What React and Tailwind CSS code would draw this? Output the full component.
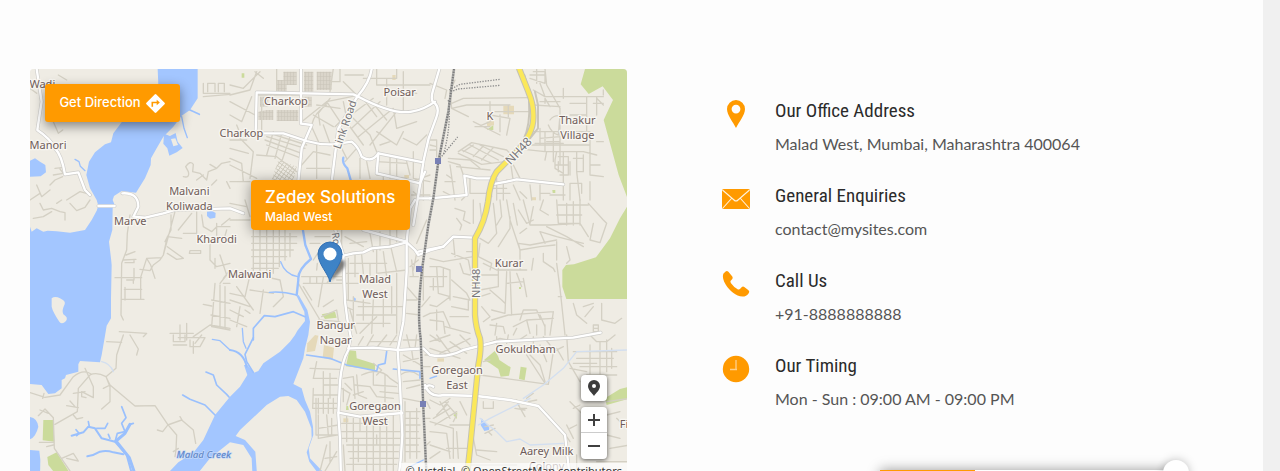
import React from "react";

/* ---------- map data ---------- */

const WATER = [
  "M383 12 L385 60 L300 150 L275 172 L250 205 L243 232 L225 238 L195 262 L177 290 L169 330 L180 370 L200 405 L205 422 L200 437 L185 465 L165 495 L120 503 L80 499 L53 497 L40 500 L20 490 L5 500 L0 485 V957 L35 960 L55 987 L75 985 L95 970 V945 L105 940 L108 930 L145 920 V898 L150 888 L210 892 L215 870 L225 812 L230 782 L243 760 V700 L245 600 L243 580 L237 530 L247 495 L248 430 L254 420 L248 405 L252 393 L275 378 L318 383 L345 340 L362 300 L363 280 L380 250 L400 215 L430 185 L455 152 L480 135 L503 100 V12 Z",
  "M0 287 L15 280 L30 290 L46 300 L48 322 L32 334 L0 335 Z",
  "M402 206 L420 213 L437 204 L443 230 L458 249 L440 262 L418 272 L412 250 L400 236 Z",
  "M531 440 L545 437 L557 444 L556 458 L540 461 L531 453 Z",
  "M0 1056 Q22 1060 25 1085 Q18 1115 0 1123 Z",
  "M0 1155 L28 1157 L31 1185 L30 1242 H0 Z",
  "M400 1242 L420 1218 L445 1192 L490 1163 L520 1125 L555 1050 L600 995 L630 965 L652 930 L642 900 L652 900 L672 923 L685 918 L700 895 L750 860 L780 830 L795 810 L802 797 L825 768 L823 740 L800 694 L806 690 L832 735 L840 770 L835 810 L825 850 L820 880 L790 957 L815 970 L825 1005 L840 1040 L849 1085 L850 1110 L836 1150 L840 1180 L880 1222 L862 1222 L838 1190 L830 1162 L845 1118 L844 1090 L825 1040 L800 1005 L775 993 L750 995 L710 1020 L630 1095 L617 1113 L645 1125 L676 1160 L682 1242 H668 L665 1180 L640 1140 L600 1132 L540 1180 L490 1242 Z",
  "M1355 1060 L1378 1088 L1377 1095 L1363 1098 L1352 1080 Z",
  "M972 697 L978 701 L976 712 L971 708 Z",
];

const ISLANDS = [
  "M65 700 Q75 692 90 700 Q108 708 104 718 Q94 738 100 748 Q116 758 108 768 Q96 780 88 770 Q68 740 65 725 Z",
  "M423 222 L436 220 L444 240 L430 244 Z",
];

const STREAMS = [
  ["M455 155 L462 190 L472 218", 4], ["M480 135 L508 148", 5], ["M135 283 L147 290 L151 304 L165 317", 4],
  ["M940 278 Q935 295 952 310 L962 345", 7],
  ["M818 490 L826 540 L843 582 Q802 615 805 645 L800 690", 7],
  ["M752 590 Q765 628 803 635", 4], ["M718 682 Q755 678 800 690", 4],
  ["M670 825 V790 L703 752 L735 755 L790 740 L825 755", 5], ["M670 818 L645 868 L650 890 L670 922", 5],
  ["M600 855 Q640 860 650 905", 6], ["M637 790 L640 830 L648 850", 4],
  ["M528 921 L550 930 L560 960 L590 988 L597 996", 5], ["M458 990 L480 1003 L525 1020 L555 1050", 5],
  ["M547 823 L570 827 L600 855", 4], ["M310 1242 L290 1170 L255 1130 L215 1120 L195 1090 L175 1085 L160 1102 L125 1112", 6],
  ["M320 1242 L298 1178 L258 1128 L285 1105 L300 1078", 9],
  ["M175 1070 L178 1085 M200 1090 L225 1090 L233 1075 M138 1094 L147 1105 L140 1112 M235 1108 L240 1120 M255 1130 L262 1105 L285 1100 L275 1075 L288 1058 L275 1025 M300 1078 L310 1075", 5],
  ["M172 1174 Q190 1172 210 1160 Q230 1155 250 1162 L280 1168", 6],
  ["M830 870 L900 880 L950 900 L1040 918 L1045 900 L1065 895 L1070 860", 5],
  ["M1090 912 L1170 920 L1170 940", 5], ["M1140 1205 L1180 1185", 4], ["M1200 940 L1220 933", 4],
];

const BROOKS = [
  "M215 890 Q240 895 250 920", "M1480 1000 L1540 960 L1600 910 L1640 860 L1790 855",
  "M1350 1060 L1400 1100 L1430 1130 L1470 1122 L1500 1140 L1600 1135", "M1345 1080 L1380 1060 L1440 1030 L1500 1000",
];

const GREENS = [
  "M1665 12 L1652 58 L1676 87 L1718 64 L1749 105 L1721 165 L1766 330 L1800 420 V12 Z",
  "M1800 410 L1770 460 L1740 520 L1698 577 L1632 598 L1608 600 L1597 615 V665 L1609 702 H1800 Z",
  "M958 856 L978 858 L980 880 L1035 897 L1035 915 L948 904 Z",
  "M875 748 L915 740 L920 758 L885 762 Z", "M1370 195 L1390 180 V195 L1375 195 Z",
  "M1362 885 L1395 857 L1405 875 L1408 885 L1442 907 L1437 932 L1412 935 L1405 912 L1380 895 Z",
  "M1472 905 L1490 908 L1484 946 L1467 942 Z",
  "M40 1065 H70 L73 1130 L38 1126 Z", "M52 1176 L80 1162 L120 1225 L75 1225 L55 1200 Z",
  "M1725 1000 L1770 972 L1800 965 V1000 L1730 1020 Z", "M1270 1050 L1282 1042 L1280 1062 Z",
  "M949 1023 H956 V1035 H948 Z", "M635 25 H643 V38 H635 Z", "M1567 375 H1576 V384 H1568 Z", "M1467 666 h6 v6 h-6 Z",
];
const SANDS = [
  "M832 835 L855 810 L865 812 L855 858 L830 862 Z", "M882 840 L912 848 L908 886 L878 878 Z",
  "M1420 122 H1452 V148 H1420 Z", "M1370 170 L1392 162 V180 L1372 185 Z", "M1505 397 h13 v9 h-13 Z",
  "M862 34 H885 V48 H862 Z", "M1222 880 H1242 V890 H1222 Z", "M940 1060 H955 V1072 H940 Z",
  "M1087 30 h10 v15 h-10 Z", "M1123 330 h14 v10 h-14 Z",
];

/* minor streets, one list per 600x405 sheet */
const SHEETS = [
  [0, 0, "M60 75 L75 95 L60 110 M70 170 L85 205 L98 195 M520 55 V85 H600 M533 80 V55 H555 V80 M565 80 V55 H583 V80 M520 95 L600 88 M75 310 L95 308 M70 330 L100 325 L90 312 M60 360 L75 345 L98 335 M20 360 L35 395 L60 375 M0 405 L30 385 M110 405 L150 380 L180 388 M460 335 Q480 340 475 320 L467 305 Q480 285 490 298 L488 320 L510 325 L530 345 L535 320 L560 310 M540 298 L560 310 L575 295 L600 290 M560 345 L545 360 M590 350 L600 370 M500 345 L520 330 M0 70 L20 85 M85 30 L110 45"],
  [0, 405, "M30 10 L40 30 L65 25 L90 35 L105 38 V60 M10 55 L40 50 L65 35 M120 10 L140 32 L165 22 L180 0 M80 10 L95 0 M300 45 L292 100 L290 150 L275 190 L273 345 L280 360 M288 165 L315 155 M280 180 L318 178 M285 188 H312 V178 M255 233 H335 M312 205 V240 H290 M283 268 H335 M273 298 H342 M332 298 V232 L350 175 L395 173 M285 300 V262 M310 250 V240 M350 175 L362 195 L375 235 M330 208 L360 212 L370 195 L390 180 L400 165 L412 110 L455 115 M435 35 L400 165 M423 45 V90 L405 125 M412 140 L460 175 L440 178 L412 160 M480 152 H512 V160 H478 Z M445 90 L485 40 M500 35 V105 M460 100 H500 M515 45 L520 80 L545 95 L560 80 H600 M560 70 V130 M600 55 L575 75 M590 90 L580 125 M540 130 V180 L560 200 L600 190 M555 175 V205 M570 165 L590 225 L570 250 M600 210 L580 235 M555 250 L545 380 L600 390 M545 300 L600 310 M570 255 V385 M585 260 V385 M543 345 L600 355 M600 250 H580 M520 313 L545 318 M268 395 L350 400 L340 410 M420 400 H490 M450 375 V420 M470 370 V420 M490 410 L540 375 L600 385"],
  [0, 810, "M280 0 L260 60 L258 100 L228 125 L240 150 L315 213 L375 212 L413 268 L440 300 L438 345 M230 20 L275 22 M300 0 L325 42 L320 60 M228 125 Q200 110 180 120 L145 160 L142 230 L75 268 M185 118 Q160 100 130 125 L90 180 L45 187 L0 173 M42 175 L38 190 M165 100 L190 155 V188 L155 170 V185 L168 188 M130 175 L165 170 M110 212 L145 218 M120 198 L135 215 M130 240 L140 252 L158 248 M230 130 L240 155 V200 L215 222 M220 160 L240 150 M413 270 L455 255 L490 285 L497 325 M450 245 L458 258 M382 285 L398 290 L412 272 M430 350 L445 340 M438 345 L435 365 M70 250 L73 340 L120 408 M28 322 H70 M50 335 L70 330 M25 242 L45 222 L70 248 M30 225 L55 235 M95 370 L130 355 L145 378 L110 370 M430 0 V20 H465 V0 M445 8 H525 L510 35 H480 V15 M490 20 V55 M430 30 H470 M515 0 L495 25"],
  [600, 0, "M0 90 L60 75 L80 20 M75 20 L100 40 M0 60 L40 70 L90 20 M0 110 L75 150 M35 170 L65 95 M85 90 H210 M95 100 V205 M215 170 L290 110 L380 92 M140 90 V12 M0 150 L35 170 M245 180 Q255 140 290 120 M270 180 L265 145 L300 100 M290 110 L330 170 L315 185 M250 150 L310 185 M260 120 L330 130 M245 185 L270 240 M280 180 L300 235 M340 110 L350 160 M345 165 L400 240 M350 140 L420 210 L440 260 M350 160 L430 100 M365 190 L450 110 M385 215 L490 130 M420 240 L500 140 M440 200 L500 240 L520 200 M395 95 L440 155 M425 110 L470 165 M400 40 H500 V0 M440 0 V60 H600 M470 40 V120 M520 20 V140 M500 75 L560 85 M490 130 L500 190 L560 170 M310 10 L300 80 M330 12 V50 H300 M340 50 L380 90 M345 30 H400 M530 290 L540 330 M480 270 V340 M500 280 V350 M440 290 L530 295 M450 240 L480 230 M520 220 L560 240 L590 210 M120 205 L230 240 M110 215 L225 250 M105 225 L215 265 M110 240 L215 280 M130 200 L110 270 M155 205 L135 280 M180 215 L155 290 M80 270 L140 275 L200 320 M0 280 L35 295 L40 350 M30 220 L70 260 L60 340 M0 300 L80 340 M0 350 H60 M215 300 L250 260 L300 270 M260 240 V340 M230 310 H300 M330 240 L350 280 M380 250 L345 290 M390 280 V340 M410 290 L420 340 M440 330 L530 340 M460 330 V345 M0 225 H50 M0 250 L55 265 M20 180 L30 205 M550 260 V340 L600 350 M550 380 L580 405 M545 350 L600 330 M580 300 V400 M545 390 H600"],
  [600, 405, "M0 60 H60 M0 10 L50 20 M45 0 L60 50 M65 110 H200 M65 130 H200 M65 150 H190 M65 170 H170 M70 190 H150 M65 205 H145 M70 90 V215 M90 90 V220 M110 85 V230 M130 90 V220 M148 90 V200 M165 90 V180 M180 100 V170 M60 225 L45 290 L0 280 M0 300 L60 320 M20 260 L70 330 M0 330 L40 350 M0 360 L50 380 M30 320 L20 380 M45 330 L60 340 M60 220 L150 240 L160 290 L130 320 M60 270 L130 280 M100 270 L90 340 M215 230 H335 M220 250 H335 M240 230 V250 M260 230 V250 M280 232 L265 320 M205 250 L270 360 M260 210 L262 190 M310 225 L290 250 M320 240 H335 M220 260 L245 300 M270 130 H240 M270 150 L250 180 M255 110 H300 M355 175 V300 M375 165 V230 M395 165 L400 220 M360 190 H470 M350 220 H385 M420 190 V240 M440 150 V220 L530 210 M460 155 L470 230 M480 130 L500 215 M345 250 H385 M350 300 L420 310 M370 290 V380 M400 300 V360 M385 320 H520 M430 300 L425 400 M460 290 V380 M485 260 V340 M500 220 V400 M380 345 H500 M370 370 H480 M390 400 L440 350 M360 330 L380 400 M420 100 L430 155 M450 95 V150 M480 90 V140 M500 80 V125 M360 130 L410 125 M345 110 L400 140 M335 90 V160 M545 180 L550 230 M540 230 H565 M560 160 L550 210 M530 260 L565 300 M525 300 H560 M530 340 L570 345 M540 200 L565 180 M580 160 V300 M600 230 H575 M590 60 L560 130 M600 290 L575 320 M580 350 L600 340 M275 350 L320 330 L325 360 M265 360 L330 365 M280 320 L310 300 M345 320 L370 330"],
  [600, 810, "M260 80 L250 130 H320 M240 100 L330 103 M280 110 V215 M300 115 V190 M285 130 H320 M280 150 H325 M250 180 H325 M258 190 V300 H325 M250 160 L248 220 H322 M265 235 V190 M280 190 V235 M295 190 V235 M310 190 V235 M248 205 H322 M265 240 V310 M290 240 L295 300 M265 280 L325 270 M305 250 V300 M265 310 L320 300 M290 330 L270 408 M320 350 L285 408 M300 320 V380 M285 370 L320 365 M340 130 L370 125 L375 190 M345 145 L365 165 M335 160 L360 175 L350 210 M340 200 V160 M380 120 L385 180 L410 190 M395 120 Q450 95 480 130 L510 150 M375 150 L420 155 L440 185 L490 190 M430 110 V150 L500 155 M370 180 L400 170 M465 120 V200 M450 170 L505 175 M350 240 V320 M370 250 V408 M390 245 V290 M410 245 V408 M430 245 V408 M450 250 V408 M470 245 V408 M490 240 V408 M335 290 H510 M335 310 H510 M350 330 H510 M355 350 H505 M360 370 H505 M335 265 H420 M340 330 L345 408 M385 310 V380 M350 388 H500 M440 300 V330 M525 200 V380 M540 230 V370 M560 220 V370 M525 230 H570 M525 250 H565 M525 270 H570 M525 290 H565 M525 310 H570 M525 330 H565 M525 350 H570 M520 190 L570 200 M530 160 L570 150 M510 120 Q540 100 565 120 M520 140 L570 135 M520 80 L565 70 M530 0 L540 40 M560 0 L555 40 M385 30 L400 5 M410 35 L430 0 M440 38 L470 0 M480 30 L500 0 M420 20 H500 M520 15 H570 M520 60 L580 95 M545 45 L550 80 M580 95 H600 M585 60 H600 M430 85 L455 105 L440 120 M590 200 L600 220 M585 250 H600 M590 330 L600 320"],
  [1200, 0, "M0 55 L50 75 L45 100 M75 45 L60 80 L65 130 L115 155 M65 115 L100 100 L300 98 M65 130 L110 120 H240 M145 185 L180 170 V110 M135 185 H180 M180 150 L240 160 L230 210 M180 140 H300 M235 120 V155 M210 150 V200 M130 170 L210 210 M300 40 L345 55 V20 H310 M330 55 L345 95 M310 75 L345 95 H520 M300 30 H345 M320 12 V55 M345 12 L350 60 L390 130 V300 M345 100 L360 125 M345 100 V115 M330 110 H390 M310 120 L390 125 M310 200 H480 M330 220 L390 215 M315 235 H400 M400 70 V100 M470 95 V210 M500 95 V150 M420 115 H470 M420 150 H470 M490 115 H520 M360 165 Q370 150 390 152 M355 180 Q365 205 385 210 L390 150 M270 240 H480 M255 250 L345 260 H460 L500 270 M345 200 V260 M370 200 V290 M330 190 V240 M350 230 H390 M240 280 L250 350 M250 300 L270 340 M350 260 L345 285 M375 285 L380 260 M375 285 V310 L400 325 V405 M385 275 H415 V330 H390 M375 300 H415 M385 290 V320 M400 260 V330 M440 260 V320 H460 V270 M430 280 H460 M420 290 V330 M480 250 V330 L520 335 M480 300 H510 M480 210 V250 M500 230 H520 M440 320 L450 405 M300 360 L305 405 M330 360 V405 M360 390 H405 M420 355 V405 M455 385 V355 H420 M480 350 V405 M330 385 H360 M270 380 L290 400 M85 260 L125 233 L230 255 L240 265 M85 265 L155 298 L225 290 M95 255 L185 295 M120 240 L205 285 M150 240 L220 275 M100 260 L130 240 M130 275 L160 243 M155 285 L190 248 M0 225 H20 V275 M0 240 L20 245 M0 255 H20 M55 290 L90 300 L100 330 M55 280 L120 285 L150 310 M80 305 L180 315 M60 300 L75 405 M50 330 L65 340 M45 350 H75 M120 335 V385 H170 M110 390 L95 405 M200 340 V405 M220 350 V405 M190 370 H230 M200 385 H240 M250 360 L270 405 M60 390 L40 380 M500 100 L520 120 M520 90 V75 M250 350 L230 345 M180 340 L185 395"],
  [1200, 405, "M75 25 L105 35 L100 60 L120 70 M80 55 L95 75 L90 90 M130 0 V70 M150 10 L155 60 M190 10 L200 100 L175 130 L150 115 M210 0 L215 50 L200 75 M230 0 L240 60 L270 150 L265 130 M240 50 V85 L205 140 M250 10 L262 75 M265 30 L290 70 L310 60 M280 0 L300 75 H360 L450 70 L475 110 M310 20 L300 70 M270 100 L290 85 M265 130 L300 135 L380 120 M270 150 L330 140 L375 135 M330 95 L345 130 M380 125 V180 M340 160 V185 L370 205 L375 215 M310 175 L305 210 M330 95 L380 110 L460 130 M350 80 L410 110 L460 140 M340 0 L330 30 L355 45 M380 0 L385 70 H450 M410 10 V75 M430 5 V75 M450 0 V75 M385 15 H475 M380 45 H455 M475 10 L520 60 L530 70 M530 70 L510 128 L480 120 L490 70 M410 140 L420 180 L410 190 M380 190 L390 265 L405 405 M270 150 V210 M110 155 H130 M65 160 L115 180 L125 230 M0 200 H30 L60 210 V300 M0 230 H50 M10 235 V270 M40 205 V260 H0 M20 200 L25 280 L60 290 M0 175 L40 185 L130 170 M70 120 L75 170 M90 190 L100 220 L120 225 M65 240 L110 280 L120 300 L70 290 M60 290 L20 320 L0 315 M0 340 L40 335 L60 380 M20 330 V390 M65 320 L115 330 V300 M45 380 L120 400 M60 350 H115 M0 360 L40 365 L45 400 M150 130 L145 170 L185 190 L180 210 M160 190 L200 210 H290 M205 205 V260 L150 270 M155 225 H205 M230 215 L225 340 L185 330 M240 215 L245 345 M260 220 L275 260 M280 235 L290 290 M150 290 L180 280 M230 250 L280 245 M155 320 L180 350 L160 365 M180 270 L215 300 L225 310 M185 360 L235 345 L300 340 L370 335 M270 360 L280 330 L320 330 L330 355 M180 375 L220 380 L225 400 M200 370 L195 405 M290 360 L300 400 M250 380 L290 360 L370 355 M260 385 L250 405 M320 375 V405 M345 375 V405 M330 345 L345 380 M370 335 L360 405 M430 310 L440 345 L470 370 M460 320 L490 310 M465 350 L490 320 M515 310 V360 L555 370 L575 355 M490 375 V395 H505 V375 Z M490 385 H505 M385 290 L395 290"],
  [1200, 810, "M0 20 L60 0 M20 0 L65 60 M0 40 L90 70 M30 55 L120 10 M60 20 L110 55 M90 0 L120 30 M0 0 L30 20 M160 30 L210 10 L260 20 L290 0 M200 30 V5 M230 25 L235 0 M310 5 V25 M340 5 L360 30 M380 40 L400 75 M160 80 L180 75 M150 120 L355 148 L370 50 L400 35 M290 60 L345 145 M300 60 L330 90 L345 140 M350 40 L370 50 M330 30 L350 80 M410 0 L415 80 L450 140 M430 50 H560 M440 70 H550 M430 85 H500 M450 95 H560 M480 30 V100 M510 20 V120 M530 15 V110 M545 40 V100 M420 100 L470 110 M555 0 L530 20 H500 L480 0 M470 120 H560 M480 100 V120 M160 200 V220 H190 V200 M260 195 L270 220 H290 M265 210 L285 245 M255 220 L285 225 M290 190 L310 175 M295 200 L320 195 M165 275 L190 270 M165 295 L195 280 M175 290 L185 300 M0 195 L30 210 L60 190 M30 200 L60 250 M45 200 L80 240 L70 260 M40 215 L55 200 M20 240 L50 210 M10 250 L60 220 M15 270 L80 230 M90 200 L110 240 M60 270 H120 M0 260 L70 280 V370 M0 290 L50 295 L60 370 M80 290 L85 370 M50 340 H110 M0 330 L60 350 M0 370 L30 350 M130 310 L140 360 L180 375 M140 345 L200 350 M110 390 H260 M410 270 L430 310 M400 290 L420 320 M420 280 L440 270 M420 200 L460 240 M430 220 L450 210 M530 240 L570 230 M530 300 L570 310 M540 340 L600 330 M530 200 L600 190 M440 360 V400 M500 380 H600 M560 250 L590 280"],
];

const MAJOR = [
  "M20 12 L35 110 L22 195 Q60 220 75 250 Q95 270 105 328 L145 322 L165 375 L180 390",
  "M277 385 Q325 382 325 425 L310 455 L345 458 L400 445 L435 435 L600 430 L640 445",
  "M205 423 H254",
  "M677 205 L680 82 L970 88 L985 95 Q1090 150 1145 140 Q1180 135 1215 110",
  "M813 12 L813 176 L845 180 L815 250 L805 350", "M677 205 H760 L830 228 Q870 240 910 238 L965 230 Q985 245 995 275 Q1025 295 1045 265 L1180 292 L1170 360 L1150 480",
  "M1045 265 L1040 325 L1170 355 L1185 320", "M1025 12 Q1020 50 982 95 L925 190 L905 350 L908 470 L940 570 L945 710 Q950 760 962 815",
  "M962 815 L955 855 Q935 890 930 950 L925 1050 L930 1120 L933 1242",
  "M1228 12 L1208 80 Q1200 110 1215 115 Q1230 130 1218 160 L1196 220 L1180 290",
  "M940 572 L970 565 L1000 562 L1025 550 L1080 545 L1130 532 L1155 555 L1165 570 L1200 556 L1240 545 L1270 515 L1330 518",
  "M1000 495 L1130 530 L1140 430 L1155 405", "M1130 530 V620 L1120 770 L1103 856 L1110 960 L1117 1110 L1112 1185 L1105 1242",
  "M1200 400 L1310 390 L1303 332 L1340 340 L1385 340 M1385 358 L1430 350 L1460 343 L1600 358",
  "M955 850 L1030 848 L1105 855 L1180 850 L1200 870 Q1250 880 1300 855 L1400 830 L1630 818 L1712 803",
  "M925 1043 L990 1055 L1117 1044", "M1165 560 L1190 555 L1240 545", "M1185 960 Q1200 1000 1240 990 L1340 993 L1440 1005 L1525 1023 L1550 1050 L1605 1110 L1620 1242",
  "M1185 970 Q1195 955 1210 965", "M1165 400 H1200",
];

const RAILS = ["M1272 12 L1255 140 L1225 290 L1210 400 L1195 480 L1178 600 Q1160 740 1172 820 L1180 1030 L1190 1242"];
const SIDINGS = ["M1258 75 L1290 58 L1410 43", "M1262 80 L1285 72 L1410 61", "M1230 280 L1283 216", "M1255 105 Q1265 180 1240 270"];
const HIGHWAY = "M1468 12 L1495 80 Q1512 120 1510 160 Q1510 205 1460 260 L1400 320 Q1380 350 1374 410 Q1365 470 1335 520 L1335 750 Q1338 790 1350 820 Q1355 850 1345 900 L1320 1150 L1310 1242";

const LABELS = [
  ["Wadi", 37, 69], ["Manori", 54, 252], ["Charkop", 768, 119], ["Charkop", 634, 216], ["Malvani", 478, 390],
  ["Koliwada", 478, 434], ["Marve", 301, 479], ["Kharodi", 560, 534], ["Malwani", 659, 638], ["Poisar", 1109, 94],
  ["Thakur", 1642, 177], ["Village", 1642, 222], ["Kurar", 1437, 605], ["Malad", 1035, 653], ["West", 1035, 698],
  ["Bangur", 917, 793], ["Nagar", 917, 838], ["Gokuldham", 1487, 863], ["Goregaon", 1281, 926], ["East", 1281, 971],
  ["Goregaon", 1035, 1036], ["West", 1035, 1081], ["Aarey Milk", 1550, 1170], ["Colony", 1550, 1214], ["K", 1380, 164], ["Fi", 1782, 1088],
];

const ROAD_LABELS = [
  ["Link Road", 943, 178, -71, 33], ["Road", 922, 538, 82, 30], ["NH48", 1465, 257, -46, 36], ["NH48", 1335, 655, -90, 33],
];

function Streets({ x, y, d }) {
  return <path transform={`translate(${x} ${y})`} d={d} />;
}

function MapDrawing() {
  return (
    <svg
      className="block h-full w-full"
      viewBox="0 12 1791 1230"
      preserveAspectRatio="xMinYMin slice"
      role="img"
      aria-label="Map of Malad West"
      fill="none"
      strokeLinejoin="round"
      strokeLinecap="round"
    >
      <defs>
        <pattern id="blocks" width="9" height="12" patternUnits="userSpaceOnUse">
          <rect width="9" height="12" fill="#dad5ca" />
          <path d="M0 12 H9 M9 0 V12" stroke="#c9c4b8" strokeWidth="3" />
        </pattern>
        <pattern id="lanes" width="10" height="10" patternUnits="userSpaceOnUse" patternTransform="rotate(35)">
          <path d="M0 0 H10 M0 0 V10" stroke="#cdc9bc" strokeWidth="5" />
        </pattern>
      </defs>
      <rect width="1800" height="1260" fill="#efece4" />
      <g fill="#cbdb9b">{GREENS.map((d) => <path key={d} d={d} />)}</g>
      <g fill="#e5d9b9">{SANDS.map((d) => <path key={d} d={d} />)}</g>
      <g fill="#a3c6ff">{WATER.map((d) => <path key={d} d={d} />)}</g>
      <g fill="#efece4">{ISLANDS.map((d) => <path key={d} d={d} />)}</g>
      <g fill="url(#blocks)">
        <path d="M760 20 H800 V60 H770 V80 H740 V45 H760 Z M822 20 H850 V80 H822 Z M860 20 H905 V75 H860 Z M690 95 H715 V125 H690 Z M710 135 H730 V165 H685 V140 Z M740 135 H805 V168 H740 Z M820 95 H845 V125 H820 Z" />
      </g>
      <path d="M745 285 L800 305 L790 345 H725 Z" fill="url(#lanes)" />
      <g stroke="#d4d0c4" strokeWidth="4">
        {SHEETS.map(([x, y, d]) => <Streets key={`${x}-${y}`} x={x} y={y} d={d} />)}
      </g>
      <g stroke="#d3dff0" strokeWidth="4">{BROOKS.map((d) => <path key={d} d={d} />)}</g>
      <g stroke="#9ac0fd">{STREAMS.map(([d, w]) => <path key={d} d={d} strokeWidth={w} />)}</g>
      <g stroke="#cfcecb" strokeWidth="11">{MAJOR.map((d) => <path key={d} d={d} />)}</g>
      <g stroke="#ffffff" strokeWidth="7">{MAJOR.map((d) => <path key={d} d={d} />)}</g>
      <g strokeLinecap="butt">
        {RAILS.map((d) => <path key={d} d={d} stroke="#b4b4b2" strokeWidth="8" />)}
        {RAILS.map((d) => <path key={d} d={d} stroke="#777777" strokeWidth="6" strokeDasharray="4 4" />)}
        {SIDINGS.map((d) => <path key={d} d={d} stroke="#8d8d8d" strokeWidth="4" strokeDasharray="4 4" />)}
      </g>
      <path d="M1483 30 L1500 90 M1497 110 Q1502 180 1480 225 M1515 80 L1524 120 V190 L1500 220" stroke="#cac6ba" strokeWidth="6" />
      <path d={HIGHWAY} stroke="#c4c2b4" strokeWidth="19" />
      <path d={HIGHWAY} stroke="#fbe85a" strokeWidth="13" />
      <g fill="#7880b5">
        <rect x="1215" y="279" width="18" height="18" />
        <rect x="1158" y="603" width="18" height="18" />
        <rect x="1170" y="1008" width="18" height="18" />
      </g>
      <g fontFamily="'Noto Sans', 'Open Sans', sans-serif" textAnchor="middle" stroke="#f8f6f1" strokeWidth="8" paintOrder="stroke">
        <g fontSize="33" fill="#6f5c59">
          {LABELS.map(([t, x, y]) => <text key={`${t}${x}${y}`} x={x} y={y}>{t}</text>)}
        </g>
        <g fill="#77777a">
          {ROAD_LABELS.map(([t, x, y, r, s]) => (
            <text key={`${t}${x}`} fontSize={s} dominantBaseline="central" transform={`translate(${x} ${y}) rotate(${r})`}>{t}</text>
          ))}
        </g>
        <text x="521" y="1179" fontSize="29" fontStyle="italic" fontWeight="500" fill="#6288c8" stroke="#c5d9fa" strokeWidth="4">Malad Creek</text>
      </g>
    </svg>
  );
}

function MapMarker() {
  return (
    <svg className="block h-[42px] w-[38px]" viewBox="0 0 38 42" fill="none" aria-hidden="true">
      <defs>
        <linearGradient id="pin" x1="0" y1="0" x2="0" y2="1">
          <stop offset="0" stopColor="#3f7fc4" />
          <stop offset="1" stopColor="#3d86c8" />
        </linearGradient>
        <filter id="soft" x="-50%" y="-50%" width="200%" height="200%"><feGaussianBlur stdDeviation="1.8" /></filter>
      </defs>
      <path d="M13 40 L20 20 Q29 16 28 24 Q27 29 13 40Z" fill="#222" opacity=".55" filter="url(#soft)" />
      <path d="M13 41 C11 32 1 23 1 13 A12 12 0 0 1 25 13 C25 23 15 32 13 41Z" fill="url(#pin)" stroke="#316fb3" />
      <circle cx="13" cy="13" r="6.5" fill="#fff" />
    </svg>
  );
}

/* ---------- contact details ---------- */

function PinIcon() {
  return (
    <svg className="h-7 w-7" viewBox="0 0 28 28" aria-hidden="true">
      <path fillRule="evenodd" fill="#ff9a00" d="M14 0 A9 9 0 0 0 5 9 C5 15 11 22 14 28 C17 22 23 15 23 9 A9 9 0 0 0 14 0 Z M14 4.7 A4.4 4.4 0 1 1 14 13.5 A4.4 4.4 0 1 1 14 4.7 Z" />
    </svg>
  );
}
function MailIcon() {
  return (
    <svg className="h-7 w-7" viewBox="0 0 28 28" fill="none" aria-hidden="true">
      <rect x="0" y="4" width="28" height="20" rx="1.5" fill="#ff9a00" />
      <path d="M.5 5 L12 15 Q14 17 16 15 L27.5 5 M.5 23.5 L9.500 13.500 M27.500 23.500 L18.500 13.500" stroke="#fff3df" strokeWidth="1.1" />
    </svg>
  );
}
function PhoneIcon() {
  return (
    <svg className="h-7 w-7" viewBox="0 0 28 28" aria-hidden="true">
      <path fill="#ff9a00" d="M1.300 3.800 L3.600 1.500 Q5 .5 6.400 1.800 L10.300 6.400 Q11.300 7.800 10.100 9.200 L8.500 11 Q8.200 12 9 13.200 Q12 17.500 16 19.400 Q17.300 19.800 18.200 18.800 L19.600 17.200 Q20.900 16.100 22.300 17 L26.500 20.300 Q28 21.700 26.700 23.200 Q24.500 26.500 20.500 26.600 C14 26.400 7.500 20.800 3.800 14.800 C1.300 10.700 .2 6.500 1.300 3.800 Z" />
    </svg>
  );
}
function ClockIcon() {
  return (
    <svg className="h-7 w-7" viewBox="0 0 28 28" fill="none" aria-hidden="true">
      <circle cx="14" cy="14" r="13.200" fill="#ff9a00" />
      <path d="M14 5 V15 M8 14.500 H15" stroke="#ffd08a" strokeWidth="1.300" />
    </svg>
  );
}

const DETAILS = [
  { icon: PinIcon, title: "Our Office Address", text: "Malad West, Mumbai, Maharashtra 400064" },
  { icon: MailIcon, title: "General Enquiries", text: "contact@mysites.com", href: "mailto:contact@mysites.com" },
  { icon: PhoneIcon, title: "Call Us", text: "+91-8888888888", href: "tel:+918888888888" },
  { icon: ClockIcon, title: "Our Timing", text: "Mon - Sun : 09:00 AM - 09:00 PM" },
];

function Detail({ icon: Icon, title, text, href }) {
  return (
    <li className="flex gap-[25px]">
      <div className="pt-1"><Icon /></div>
      <div>
        <h3 className="font-['Liberation_Sans_Narrow','Roboto_Condensed',sans-serif] text-[19px] leading-[30px] text-[#2b2b2b]">{title}</h3>
        <p className="mt-1.5 font-['Lato',sans-serif] text-[16px] leading-6 text-[#555]">
          {href ? <a href={href}>{text}</a> : text}
        </p>
      </div>
    </li>
  );
}

export default function App() {
  return (
    <div className="flex h-screen overflow-hidden bg-[#fdfdfd]">
      <main className="grid min-w-0 flex-1 grid-cols-[597fr_636fr] items-start pt-[69px] pl-[30px]">
        <section aria-label="Location" className="relative h-[410px] overflow-hidden rounded bg-[#efece4]">
          <MapDrawing />

          <a href="#directions" className="absolute top-[15px] left-[15px] flex h-[38px] w-[135px] items-center justify-center gap-1 rounded-[3px] bg-[#ff9a00] font-['Inter',sans-serif] text-[13px] font-medium text-white shadow-[0_4px_12px_rgba(0,0,0,0.45)]">
            Get Direction
            <svg className="h-[21px] w-[21px]" viewBox="0 0 21 21" fill="none" aria-hidden="true">
              <rect x="3.500" y="3.500" width="14" height="14" rx="1.200" transform="rotate(45 10.500 10.500)" fill="#fff" />
              <path d="M7.300 13.800 V9.500 H12.500" stroke="#ff9a00" strokeWidth="1.600" />
              <path d="M11.700 6.700 L14.800 9.500 L11.700 12.300 Z" fill="#ff9a00" />
            </svg>
          </a>

          <div className="absolute top-[111px] left-[221px] h-[50px] w-[159px] rounded bg-[#ff9a00] px-3.5 pt-1.5 font-['Inter',sans-serif] text-white shadow-[0_2px_14px_rgba(0,0,0,0.4)]">
            <p className="text-[17px] leading-[22px] font-medium whitespace-nowrap">Zedex Solutions</p>
            <p className="text-[12px] leading-[18px] font-medium">Malad West</p>
          </div>
          <div className="absolute top-[172px] left-[287px]"><MapMarker /></div>

          <div className="absolute top-[306px] right-5 flex w-[26px] flex-col gap-[6px]">
            <button type="button" aria-label="Locate" className="grid h-[26px] place-items-center rounded bg-white shadow-[0_1px_5px_rgba(0,0,0,0.65)]">
              <svg className="h-4 w-3" viewBox="0 0 12 16" aria-hidden="true">
                <path fillRule="evenodd" fill="#3c3c3c" d="M6 0 A6 6 0 0 0 0 6 C0 10 4 13 6 16 C8 13 12 10 12 6 A6 6 0 0 0 6 0 Z M6 4 A2 2 0 1 1 6 8 A2 2 0 1 1 6 4 Z" />
              </svg>
            </button>
            <div className="flex flex-col rounded bg-white shadow-[0_1px_5px_rgba(0,0,0,0.65)]">
              <button type="button" aria-label="Zoom in" className="grid h-[26px] place-items-center border-b border-[#ccc]">
                <svg className="h-3 w-3" viewBox="0 0 12 12" aria-hidden="true"><path d="M6 0 V12 M0 6 H12" stroke="#404040" strokeWidth="2" /></svg>
              </button>
              <button type="button" aria-label="Zoom out" className="grid h-[26px] place-items-center">
                <svg className="h-3 w-3" viewBox="0 0 12 12" aria-hidden="true"><path d="M0 6 H12" stroke="#404040" strokeWidth="2" /></svg>
              </button>
            </div>
          </div>

          <p className="absolute right-0 bottom-0 bg-white/70 px-[5px] font-['Noto_Sans',sans-serif] text-[11px] leading-4 whitespace-nowrap text-[#333]">
            © Justdial, © OpenStreetMap contributors
          </p>
        </section>

        <ul className="flex flex-col gap-[25px] pt-[27px] pl-[95px]">
          {DETAILS.map((d) => <Detail key={d.title} {...d} />)}
        </ul>
      </main>

      <div className="w-[17px] shrink-0 bg-[#f0f0f0]" />

      <div className="fixed right-[105px] -bottom-[79px] h-20 w-[295px] bg-white shadow-[0_0_12px_rgba(0,0,0,0.4)]">
        <div className="h-20 w-[95px] bg-[#ff9a00]" />
        <button type="button" aria-label="Close" className="absolute -top-2.5 -right-3.5 h-[26px] w-[26px] rounded-full bg-white shadow-[0_0_10px_rgba(0,0,0,0.25)]" />
      </div>
    </div>
  );
}
